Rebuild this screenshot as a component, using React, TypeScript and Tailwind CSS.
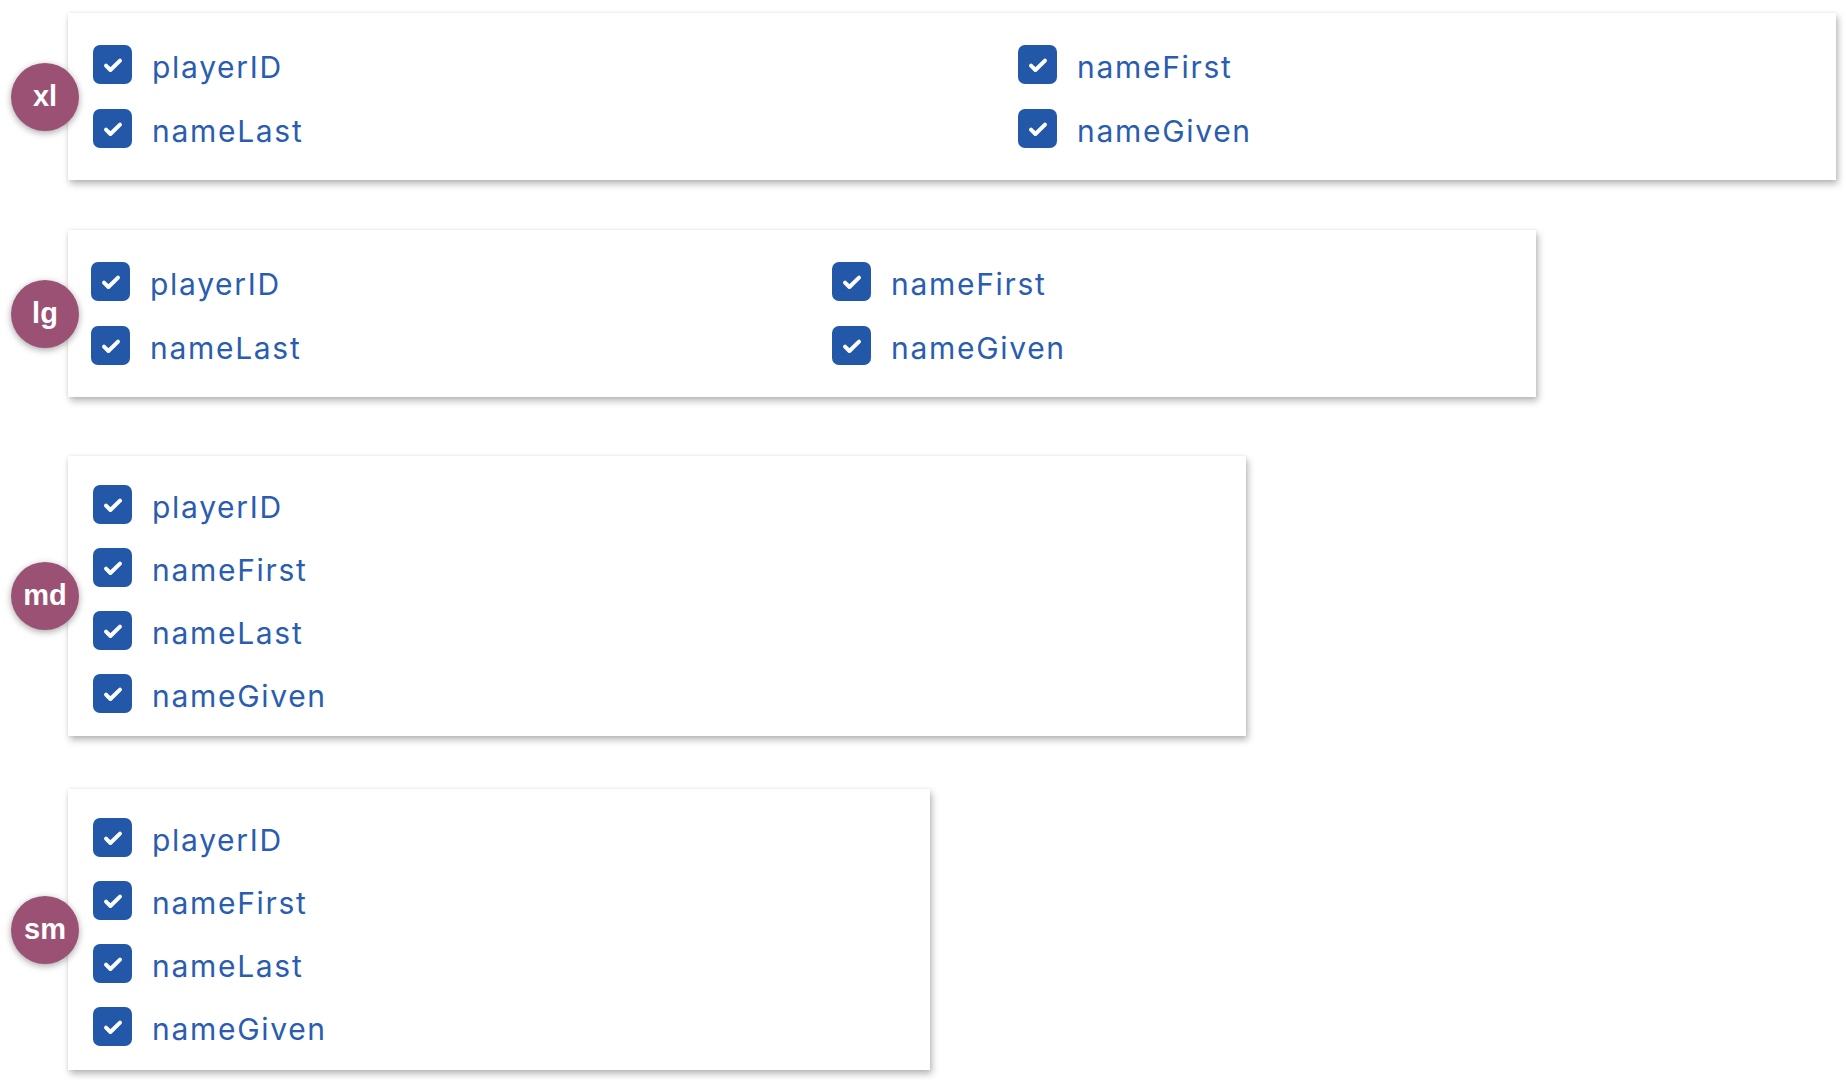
import React from 'react';

type Size = 'xl' | 'lg' | 'md' | 'sm';

const Check: React.FC = () => (
  <span className="flex h-[39px] w-[39px] shrink-0 items-center justify-center rounded-[7px] bg-[#2357a8]">
    <svg width="28" height="28" viewBox="0 0 24 24" fill="none">
      <path d="M6 12.5l3.8 3.8L18 8.3" stroke="white" strokeWidth="3.4" strokeLinecap="round" strokeLinejoin="round" />
    </svg>
  </span>
);

const Item: React.FC<{ label: string }> = ({ label }) => (
  <label className="flex h-[39px] items-center gap-5">
    <Check />
    <span className="translate-y-[2px] text-[30px] leading-none text-[#2a5daf] font-['Inter',sans-serif] tracking-[1.7px]">
      {label}
    </span>
  </label>
);

const Badge: React.FC<{ size: Size }> = ({ size }) => (
  <div className="absolute left-[-57px] top-1/2 flex h-[68px] w-[68px] -translate-y-1/2 items-center justify-center rounded-full bg-[#9b5174] shadow-[0_2px_7px_rgba(0,0,0,0.35)]">
    <span className="text-[29px] font-bold text-white font-['Liberation_Sans',Arial,sans-serif]">{size}</span>
  </div>
);

const cardBase = 'relative bg-white shadow-[2px_4px_7px_rgba(0,0,0,0.28),0_0_3px_rgba(0,0,0,0.08)]';

export default function App() {
  return (
    <div className="min-h-screen bg-white pl-[68px] pt-[13px]">
      {/* xl: two columns */}
      <div className={`${cardBase} w-[1768px] pl-[25px] py-8`}>
        <Badge size="xl" />
        <div className="grid grid-cols-[925px_1fr] gap-y-[25px]">
          <Item label="playerID" />
          <Item label="nameFirst" />
          <Item label="nameLast" />
          <Item label="nameGiven" />
        </div>
      </div>

      {/* lg: two columns */}
      <div className={`${cardBase} mt-[50px] w-[1468px] pl-[23px] py-8`}>
        <Badge size="lg" />
        <div className="grid grid-cols-[741px_1fr] gap-y-[25px]">
          <Item label="playerID" />
          <Item label="nameFirst" />
          <Item label="nameLast" />
          <Item label="nameGiven" />
        </div>
      </div>

      {/* md: single column */}
      <div className={`${cardBase} mt-[59px] w-[1178px] pl-[25px] pt-[29px] pb-[23px]`}>
        <Badge size="md" />
        <div className="flex flex-col gap-6">
          <Item label="playerID" />
          <Item label="nameFirst" />
          <Item label="nameLast" />
          <Item label="nameGiven" />
        </div>
      </div>

      {/* sm: single column */}
      <div className={`${cardBase} mt-[53px] w-[862px] pl-[25px] pt-[29px] pb-[24px]`}>
        <Badge size="sm" />
        <div className="flex flex-col gap-6">
          <Item label="playerID" />
          <Item label="nameFirst" />
          <Item label="nameLast" />
          <Item label="nameGiven" />
        </div>
      </div>
    </div>
  );
}
